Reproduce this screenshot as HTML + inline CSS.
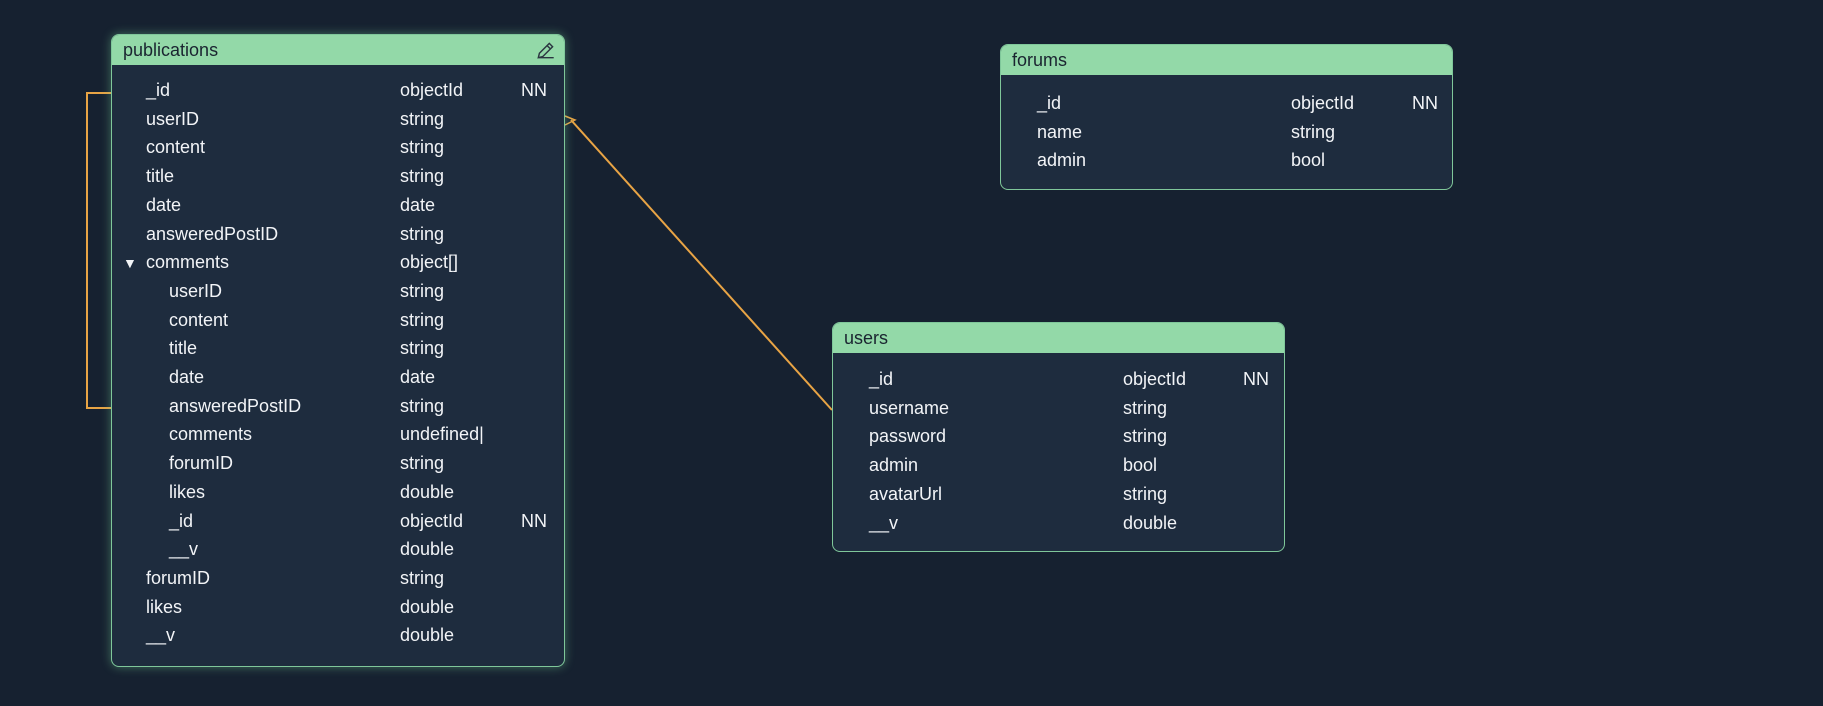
<!DOCTYPE html>
<html><head><style>
body{margin:0;width:1823px;height:706px;background:#162130;overflow:hidden;font-family:"Liberation Sans",sans-serif;position:relative}
.box{position:absolute;background:#1e2c3e;border:1.5px solid #7fc79a;border-radius:8px;box-sizing:border-box;overflow:hidden}
.hd{background:#93d9a8;height:30px;color:#1a2430;font-size:18px;line-height:30px;padding-left:11px;position:relative}
.r{position:absolute;color:#f2f4f7;font-size:18px;line-height:20px;white-space:nowrap}
</style></head><body>
<svg width="1823" height="706" style="position:absolute;left:0;top:0">
<path d="M111 93 H87 V408 H111" fill="none" stroke="#e8a445" stroke-width="2"/>
<path d="M571 120 L832 410" stroke="#e8a445" stroke-width="2" fill="none"/>
<path d="M565 116 L575 120 L565 125" stroke="#e8a445" stroke-width="1.5" fill="none"/>
</svg>
<div class="box" style="left:111px;top:34px;width:454px;height:633px;box-shadow:0 0 10px rgba(120,210,150,.45)">
<div class="hd">publications
<svg width="22" height="22" viewBox="0 0 20 20" style="position:absolute;right:7px;top:4px"><path d="M3 17 L4 13 L13 4 L16 7 L7 16 Z M11 6 L14 9 M3 17 H17" fill="none" stroke="#2a3540" stroke-width="1.3"/></svg></div>
</div>
<div class="box" style="left:1000px;top:44px;width:453px;height:146px"><div class="hd">forums</div></div>
<div class="box" style="left:832px;top:322px;width:453px;height:230px"><div class="hd">users</div></div>
<div id="rows"></div>
<script>
var out='';
function row(x,tx,nx,y,n,t,nn){out+='<div class="r" style="left:'+x+'px;top:'+(y-10)+'px">'+n+'</div><div class="r" style="left:'+tx+'px;top:'+(y-10)+'px">'+t+'</div>'+(nn?'<div class="r" style="left:'+nx+'px;top:'+(y-10)+'px">NN</div>':'');}
var p=[[0,'_id','objectId',1],[0,'userID','string'],[0,'content','string'],[0,'title','string'],[0,'date','date'],[0,'answeredPostID','string'],[0,'comments','object[]'],[1,'userID','string'],[1,'content','string'],[1,'title','string'],[1,'date','date'],[1,'answeredPostID','string'],[1,'comments','undefined|'],[1,'forumID','string'],[1,'likes','double'],[1,'_id','objectId',1],[1,'__v','double'],[0,'forumID','string'],[0,'likes','double'],[0,'__v','double']];
p.forEach(function(a,i){row(a[0]?169:146,400,521,90+i*28.7,a[1],a[2],a[3]);});
out+='<div class="r" style="left:123px;top:253px;font-size:14px">&#9660;</div>';
[['_id','objectId',1],['name','string'],['admin','bool']].forEach(function(a,i){row(1037,1291,1412,103+i*28.7,a[0],a[1],a[2]);});
[['_id','objectId',1],['username','string'],['password','string'],['admin','bool'],['avatarUrl','string'],['__v','double']].forEach(function(a,i){row(869,1123,1243,379+i*28.7,a[0],a[1],a[2]);});
document.getElementById('rows').innerHTML=out;
</script>
</body></html>
